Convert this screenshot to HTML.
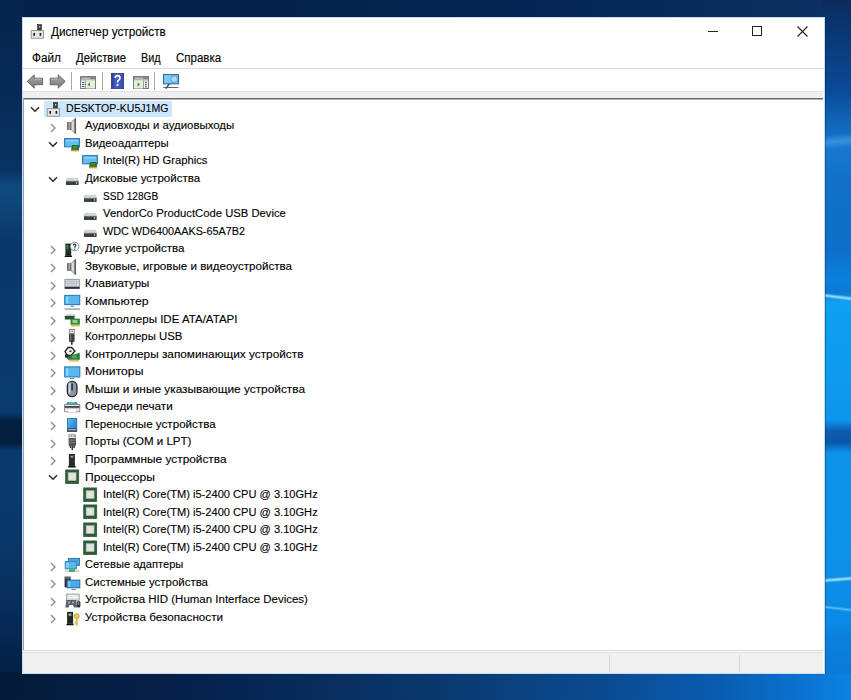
<!DOCTYPE html>
<html><head><meta charset="utf-8"><style>
html,body{margin:0;padding:0;width:851px;height:700px;overflow:hidden;}
body{position:relative;font-family:"Liberation Sans",sans-serif;background:#0a3264;}
.bg{position:absolute;left:0;top:0;width:851px;height:700px;background:#0a3468;}
.st{position:absolute;}
.win{position:absolute;left:22px;top:17px;width:803px;height:657px;background:#fff;box-sizing:border-box;border:1px solid #c8dcf0;}
.a{position:absolute;}
.t{position:absolute;font-size:12px;color:#000;-webkit-text-stroke:0.12px #000;white-space:nowrap;line-height:14px;}
.hl{position:absolute;left:44px;width:128px;height:16px;background:#cce8ff;}
.ex{position:absolute;}
.ic{position:absolute;width:16px;height:16px;}
.ic svg{display:block;}
.tx{position:absolute;font-size:11.7px;line-height:16px;white-space:nowrap;color:#000;-webkit-text-stroke:0.12px #000;transform-origin:0 50%;}
</style></head><body>
<div class="bg"></div>
<div class="st" style="left:0;top:0;width:851px;height:20px;background:linear-gradient(90deg,#04204a 0px,#04224a 300px,#062858 600px,#0a3262 851px)"></div>
<div class="st" style="left:0;top:0px;width:24px;height:680px;background:linear-gradient(180deg,#05244c 0px,#072c58 100px,#083262 170px,#0f4a80 186px,#0e4678 204px,#0a386a 240px,#0a3a6e 380px,#0a3c70 412px,#04203f 421px,#041e3e 443px,#0a3a70 451px,#0a3868 540px,#072c5a 610px,#05244c 650px,#04203f 680px)"></div>
<div class="st" style="left:0;top:672px;width:851px;height:28px;background:linear-gradient(90deg,#041a38 0px,#05204a 180px,#082e5e 330px,#0a3a70 450px,#0a4a90 600px,#0a5cb0 720px,#0a72d0 800px,#0c82e2 851px)"></div>
<div class="st" style="left:822px;top:0;width:29px;height:674px;background:linear-gradient(180deg,#0a2c5c 0px,#0a3a78 40px,#0a4a96 90px,#1068bc 125px,#1878d0 145px,#1270c8 180px,#0e70c8 250px,#0a80dc 280px,#0a7ad4 292px,#10a0f0 302px,#0d96ec 420px,#0c5eb0 431px,#0a56a6 442px,#0d92ea 453px,#0c90e8 560px,#0a8ce6 620px,#0a80dc 640px,#0a7ad6 674px)"></div>
<div class="st" style="left:822px;top:136px;width:40px;height:14px;background:linear-gradient(180deg,rgba(80,160,230,0) 0,rgba(90,170,235,0.5) 50%,rgba(80,160,230,0) 100%);transform:rotate(-6deg);transform-origin:0 50%"></div>
<div class="st" style="left:825px;top:293px;width:40px;height:5px;background:linear-gradient(180deg,rgba(150,224,255,0) 0,rgba(160,228,255,0.95) 50%,rgba(150,224,255,0) 100%);transform:rotate(7deg);transform-origin:0 50%"></div>
<div class="st" style="left:825px;top:577.5px;width:40px;height:5px;background:linear-gradient(180deg,rgba(150,224,255,0) 0,rgba(170,230,255,0.95) 50%,rgba(150,224,255,0) 100%);transform:rotate(-4.6deg);transform-origin:0 50%"></div>
<div class="st" style="left:825px;top:605px;width:40px;height:4px;background:linear-gradient(180deg,rgba(140,208,248,0) 0,rgba(150,215,250,0.6) 50%,rgba(140,208,248,0) 100%);transform:rotate(6.6deg);transform-origin:0 50%"></div>
<div class="st" style="left:825px;top:17px;width:1px;height:657px;background:rgba(0,30,80,0.35)"></div>
<div class="win"></div>
<!-- title bar -->
<div class="a" style="left:30px;top:23.3px;width:16px;height:16px"><svg width="16" height="16" viewBox="0 0 16 16" style="overflow:visible"><rect x="7.5" y="1.5" width="4" height="6.5" fill="#3c3f3c" stroke="#2a2a2a" stroke-width="0.6"/><rect x="9" y="3" width="1.2" height="1.5" fill="#cfd8cf"/><rect x="1.2" y="7.6" width="12.3" height="7.6" fill="#e6e6e6" stroke="#8c8c8c" stroke-width="0.9"/><rect x="3.4" y="10" width="1.6" height="2.8" fill="#151515"/><rect x="9.6" y="10" width="1.6" height="2.8" fill="#151515"/></svg></div>
<div class="t" style="left:50.5px;top:25px;transform:scaleX(0.978);transform-origin:0 0">Диспетчер устройств</div>
<div class="a" style="left:708px;top:31px;width:10px;height:1px;background:#222"></div>
<div class="a" style="left:752px;top:26px;width:8px;height:8px;border:1px solid #222"></div>
<svg class="a" style="left:797px;top:26px" width="11" height="11" viewBox="0 0 11 11"><path d="M0.5 0.5 L10.5 10.5 M10.5 0.5 L0.5 10.5" stroke="#222" stroke-width="1.1"/></svg>
<!-- menu -->
<div class="t" style="left:31.8px;top:51px;transform:scaleX(0.98);transform-origin:0 0">Файл</div>
<div class="t" style="left:76.3px;top:51px;transform:scaleX(0.95);transform-origin:0 0">Действие</div>
<div class="t" style="left:140.8px;top:51px;transform:scaleX(0.905);transform-origin:0 0">Вид</div>
<div class="t" style="left:176.3px;top:51px;transform:scaleX(0.96);transform-origin:0 0">Справка</div>
<div class="a" style="left:23px;top:68px;width:801px;height:1px;background:#d9d9d9"></div>
<!-- toolbar -->
<div class="a" style="left:23px;top:91px;width:800px;height:7px;background:#f0f0f0;border-top:1px solid #e3e3e3;box-sizing:border-box"></div>
<div class="a" style="left:23px;top:98px;width:800px;height:1px;background:#686868"></div>
<div class="a" style="left:24px;top:99px;width:799px;height:1px;background:#b4b4b4"></div>
<div class="a" style="left:71px;top:72px;width:1px;height:18px;background:#a8a8a8"></div>
<div class="a" style="left:102px;top:72px;width:1px;height:18px;background:#a8a8a8"></div>
<div class="a" style="left:154px;top:72px;width:1px;height:18px;background:#a8a8a8"></div>
<svg class="a" style="left:26px;top:73px" width="18" height="17" viewBox="0 0 18 17"><defs><linearGradient id="ar" x1="0" y1="0" x2="0" y2="1"><stop offset="0" stop-color="#a6a6a6"/><stop offset="1" stop-color="#7a7a7a"/></linearGradient></defs><path d="M1.2 8.4 L8.2 1.8 L8.2 5.2 L16.6 5.2 L16.6 11.7 L8.2 11.7 L8.2 15.2 Z" fill="url(#ar)" stroke="#5c5c5c" stroke-width="0.9" stroke-linejoin="round"/><path d="M9 6.2 L15.6 6.2" stroke="#c8c8c8" stroke-width="0.8"/></svg>
<svg class="a" style="left:49px;top:73px" width="18" height="17" viewBox="0 0 18 17"><path d="M16.2 8.4 L9.2 1.8 L9.2 5.2 L1.2 5.2 L1.2 11.7 L9.2 11.7 L9.2 15.2 Z" fill="url(#ar)" stroke="#5c5c5c" stroke-width="0.9" stroke-linejoin="round"/><path d="M2.2 6.2 L8.6 6.2" stroke="#c8c8c8" stroke-width="0.8"/></svg>
<svg class="a" style="left:80px;top:76px" width="16" height="13" viewBox="0 0 16 13"><rect x="0.5" y="0.5" width="15" height="12" fill="#f2f2f2" stroke="#7a7a7a"/><rect x="1" y="1" width="14" height="2.6" fill="#8a8a8a"/><rect x="2" y="1.8" width="8" height="0.8" fill="#e0e0e0"/><rect x="1" y="3.6" width="14" height="1" fill="#b8b8b8"/><rect x="5.2" y="4.6" width="0.8" height="8" fill="#8a8a8a"/><rect x="6" y="4.6" width="9" height="7.9" fill="#e2f2da"/><path d="M10 6.2 L7.6 8.5 L10 10.8 Z" fill="#4a8a48"/><rect x="2" y="6" width="2.4" height="1" fill="#555"/><rect x="2" y="8" width="2.4" height="1" fill="#555"/><rect x="2" y="10" width="2.4" height="1" fill="#555"/></svg>
<svg class="a" style="left:111px;top:73px" width="13" height="16" viewBox="0 0 13 16"><defs><linearGradient id="hq" x1="0" y1="0" x2="1" y2="0"><stop offset="0" stop-color="#24359a"/><stop offset="0.4" stop-color="#4a62c8"/><stop offset="1" stop-color="#3448a8"/></linearGradient></defs><rect x="0.3" y="0.3" width="12.4" height="15.4" fill="url(#hq)" stroke="#1c2a70" stroke-width="0.6"/><path d="M4.2 5 Q4.2 2.6 6.6 2.6 Q9 2.6 9 4.9 Q9 6.4 7.4 7.4 Q6.6 7.9 6.6 9.6" fill="none" stroke="#fff" stroke-width="1.6"/><rect x="5.7" y="11" width="1.8" height="1.8" fill="#fff"/></svg>
<svg class="a" style="left:133px;top:76px" width="16" height="13" viewBox="0 0 16 13"><rect x="0.5" y="0.5" width="15" height="12" fill="#f2f2f2" stroke="#7a7a7a"/><rect x="1" y="1" width="14" height="2.6" fill="#8a8a8a"/><rect x="2" y="1.8" width="8" height="0.8" fill="#e0e0e0"/><rect x="1" y="3.6" width="14" height="1" fill="#b8b8b8"/><rect x="1" y="4.6" width="9" height="7.9" fill="#e2f2da"/><rect x="10" y="4.6" width="0.8" height="8" fill="#8a8a8a"/><path d="M4.6 6.2 L7 8.5 L4.6 10.8 Z" fill="#4a8a48"/><rect x="12.2" y="5.8" width="1.4" height="1.2" fill="#333"/><rect x="12.2" y="8" width="1.4" height="1.2" fill="#333"/><rect x="12.2" y="10.2" width="1.4" height="1.2" fill="#333"/></svg>
<svg class="a" style="left:162px;top:73px" width="18" height="17" viewBox="0 0 18 17"><rect x="1.5" y="1.5" width="15" height="9.4" fill="#6cc0f0" stroke="#2e6a94" stroke-width="1"/><rect x="2.5" y="2.5" width="6" height="7.4" fill="#7ccaf6"/><circle cx="12.2" cy="6.2" r="3.3" fill="#a8dcf8" stroke="#4a9ad0" stroke-width="0.8"/><path d="M7.2 11 L3.8 15.6" stroke="#444" stroke-width="1.4"/><path d="M1.2 14.5 L16.4 14.5" stroke="#555" stroke-width="0.9"/></svg>
<!-- tree border left -->
<div class="a" style="left:23px;top:98px;width:1px;height:552px;background:#9aa2ac"></div>
<div class="hl" style="top:100.50px"></div><svg class="ex" style="left:30px;top:104.50px" width="10" height="8" viewBox="0 0 10 8"><path d="M1 2.3 L5 6.3 L9 2.3" fill="none" stroke="#2a2a2a" stroke-width="1.5"/></svg><div class="ic" style="left:46px;top:100.50px"><svg width="16" height="16" viewBox="0 0 16 16" style="overflow:visible"><rect x="7.5" y="1.5" width="4" height="6.5" fill="#3c3f3c" stroke="#2a2a2a" stroke-width="0.6"/><rect x="9" y="3" width="1.2" height="1.5" fill="#cfd8cf"/><rect x="1.2" y="7.6" width="12.3" height="7.6" fill="#e6e6e6" stroke="#8c8c8c" stroke-width="0.9"/><rect x="3.4" y="10" width="1.6" height="2.8" fill="#151515"/><rect x="9.6" y="10" width="1.6" height="2.8" fill="#151515"/></svg></div><div class="tx" style="left:65.60px;top:99.80px;transform:scaleX(0.9036)">DESKTOP-KU5J1MG</div>
<svg class="ex" style="left:49px;top:122.56px" width="8" height="10" viewBox="0 0 8 10"><path d="M2 1 L6 5 L2 9" fill="none" stroke="#8a8a8a" stroke-width="1.3"/></svg><div class="ic" style="left:64px;top:118.06px"><svg width="16" height="16" viewBox="0 0 16 16" style="overflow:visible"><defs><linearGradient id="sp" x1="0" x2="1"><stop offset="0" stop-color="#c4c4c4"/><stop offset="0.45" stop-color="#e6e6e6"/><stop offset="1" stop-color="#6c6c6c"/></linearGradient><linearGradient id="sr" x1="0" x2="1"><stop offset="0" stop-color="#5a5a5a"/><stop offset="0.5" stop-color="#a8a8a8"/><stop offset="1" stop-color="#7a7a7a"/></linearGradient></defs><rect x="3.2" y="4.6" width="4" height="7" fill="url(#sr)" stroke="#555" stroke-width="0.5"/><path d="M7 4.6 L11.6 0.2 L11.6 15.8 L7 11.6 Z" fill="url(#sp)" stroke="#5a5a5a" stroke-width="0.6"/><path d="M11.2 0.8 L11.2 15.2" stroke="#4a4a4a" stroke-width="0.9"/></svg></div><div class="tx" style="left:84.80px;top:117.36px;transform:scaleX(0.9763)">Аудиовходы и аудиовыходы</div>
<svg class="ex" style="left:48px;top:139.62px" width="10" height="8" viewBox="0 0 10 8"><path d="M1 2.3 L5 6.3 L9 2.3" fill="none" stroke="#2a2a2a" stroke-width="1.5"/></svg><div class="ic" style="left:64px;top:135.62px"><svg width="16" height="16" viewBox="0 0 16 16" style="overflow:visible"><rect x="0.6" y="2.6" width="14.8" height="8.2" fill="#62bdf0" stroke="#2c79b5" stroke-width="1.1"/><rect x="2" y="4" width="12" height="1.5" fill="#8ad2f8"/><path d="M7 14.5 L8 9 L14.8 9 L15 14.5 Z" fill="#2f6a30"/><rect x="9" y="10" width="4" height="2.5" fill="#3f8f3a"/><rect x="7.2" y="13.8" width="7.6" height="1.6" fill="#caa24a"/></svg></div><div class="tx" style="left:84.80px;top:134.92px;transform:scaleX(0.9629)">Видеоадаптеры</div>
<div class="ic" style="left:82px;top:153.18px"><svg width="16" height="16" viewBox="0 0 16 16" style="overflow:visible"><rect x="0.6" y="2.6" width="14.8" height="8.2" fill="#62bdf0" stroke="#2c79b5" stroke-width="1.1"/><rect x="2" y="4" width="12" height="1.5" fill="#8ad2f8"/><path d="M7 14.5 L8 9 L14.8 9 L15 14.5 Z" fill="#2f6a30"/><rect x="9" y="10" width="4" height="2.5" fill="#3f8f3a"/><rect x="7.2" y="13.8" width="7.6" height="1.6" fill="#caa24a"/></svg></div><div class="tx" style="left:102.60px;top:152.48px;transform:scaleX(0.9626)">Intel(R) HD Graphics</div>
<svg class="ex" style="left:48px;top:174.74px" width="10" height="8" viewBox="0 0 10 8"><path d="M1 2.3 L5 6.3 L9 2.3" fill="none" stroke="#2a2a2a" stroke-width="1.5"/></svg><div class="ic" style="left:64px;top:170.74px"><svg width="16" height="16" viewBox="0 0 16 16" style="overflow:visible"><defs><linearGradient id="dk" x1="0" x2="0" y1="0" y2="1"><stop offset="0" stop-color="#e8ece8"/><stop offset="1" stop-color="#b4bab4"/></linearGradient></defs><path d="M2 10.6 L3 7.3 L13.6 7.3 L14.6 10.6 Z" fill="url(#dk)" stroke="#a0a6a0" stroke-width="0.5"/><rect x="2" y="10.4" width="12.6" height="3.5" fill="#2b3630"/><rect x="3" y="11.4" width="6" height="0.9" fill="#4a5a50"/><rect x="11.8" y="11.3" width="1.4" height="1.3" fill="#e8f0e8"/></svg></div><div class="tx" style="left:84.80px;top:170.04px;transform:scaleX(0.9879)">Дисковые устройства</div>
<div class="ic" style="left:82px;top:188.30px"><svg width="16" height="16" viewBox="0 0 16 16" style="overflow:visible"><defs><linearGradient id="dk" x1="0" x2="0" y1="0" y2="1"><stop offset="0" stop-color="#e8ece8"/><stop offset="1" stop-color="#b4bab4"/></linearGradient></defs><path d="M2 10.6 L3 7.3 L13.6 7.3 L14.6 10.6 Z" fill="url(#dk)" stroke="#a0a6a0" stroke-width="0.5"/><rect x="2" y="10.4" width="12.6" height="3.5" fill="#2b3630"/><rect x="3" y="11.4" width="6" height="0.9" fill="#4a5a50"/><rect x="11.8" y="11.3" width="1.4" height="1.3" fill="#e8f0e8"/></svg></div><div class="tx" style="left:102.60px;top:187.60px;transform:scaleX(0.8669)">SSD 128GB</div>
<div class="ic" style="left:82px;top:205.86px"><svg width="16" height="16" viewBox="0 0 16 16" style="overflow:visible"><defs><linearGradient id="dk" x1="0" x2="0" y1="0" y2="1"><stop offset="0" stop-color="#e8ece8"/><stop offset="1" stop-color="#b4bab4"/></linearGradient></defs><path d="M2 10.6 L3 7.3 L13.6 7.3 L14.6 10.6 Z" fill="url(#dk)" stroke="#a0a6a0" stroke-width="0.5"/><rect x="2" y="10.4" width="12.6" height="3.5" fill="#2b3630"/><rect x="3" y="11.4" width="6" height="0.9" fill="#4a5a50"/><rect x="11.8" y="11.3" width="1.4" height="1.3" fill="#e8f0e8"/></svg></div><div class="tx" style="left:102.60px;top:205.16px;transform:scaleX(0.9640)">VendorCo ProductCode USB Device</div>
<div class="ic" style="left:82px;top:223.42px"><svg width="16" height="16" viewBox="0 0 16 16" style="overflow:visible"><defs><linearGradient id="dk" x1="0" x2="0" y1="0" y2="1"><stop offset="0" stop-color="#e8ece8"/><stop offset="1" stop-color="#b4bab4"/></linearGradient></defs><path d="M2 10.6 L3 7.3 L13.6 7.3 L14.6 10.6 Z" fill="url(#dk)" stroke="#a0a6a0" stroke-width="0.5"/><rect x="2" y="10.4" width="12.6" height="3.5" fill="#2b3630"/><rect x="3" y="11.4" width="6" height="0.9" fill="#4a5a50"/><rect x="11.8" y="11.3" width="1.4" height="1.3" fill="#e8f0e8"/></svg></div><div class="tx" style="left:102.60px;top:222.72px;transform:scaleX(0.9263)">WDC WD6400AAKS-65A7B2</div>
<svg class="ex" style="left:49px;top:245.48px" width="8" height="10" viewBox="0 0 8 10"><path d="M2 1 L6 5 L2 9" fill="none" stroke="#8a8a8a" stroke-width="1.3"/></svg><div class="ic" style="left:64px;top:240.98px"><svg width="16" height="16" viewBox="0 0 16 16" style="overflow:visible"><rect x="1.4" y="2.6" width="5.8" height="11.8" fill="#1c2a1e"/><rect x="2.4" y="3.8" width="2.2" height="4.5" fill="#3f7a42"/><rect x="2.4" y="9.5" width="3.8" height="0.7" fill="#4a5a4a"/><path d="M0.4 16 L1.2 14.2 L7.4 14.2 L8.2 16 Z" fill="#111"/><circle cx="10.6" cy="5.5" r="4.3" fill="#fbfdfb" stroke="#6a8a94" stroke-width="0.9"/><path d="M9.3 4.4 Q9.4 3.1 10.6 3.1 Q11.9 3.1 11.9 4.3 Q11.9 5.1 10.8 5.7 L10.8 6.7" fill="none" stroke="#1a2a3a" stroke-width="1.1"/><rect x="10.2" y="7.5" width="1.1" height="1.1" fill="#1a2a3a"/></svg></div><div class="tx" style="left:84.80px;top:240.28px;transform:scaleX(0.9860)">Другие устройства</div>
<svg class="ex" style="left:49px;top:263.04px" width="8" height="10" viewBox="0 0 8 10"><path d="M2 1 L6 5 L2 9" fill="none" stroke="#8a8a8a" stroke-width="1.3"/></svg><div class="ic" style="left:64px;top:258.54px"><svg width="16" height="16" viewBox="0 0 16 16" style="overflow:visible"><defs><linearGradient id="sp" x1="0" x2="1"><stop offset="0" stop-color="#c4c4c4"/><stop offset="0.45" stop-color="#e6e6e6"/><stop offset="1" stop-color="#6c6c6c"/></linearGradient><linearGradient id="sr" x1="0" x2="1"><stop offset="0" stop-color="#5a5a5a"/><stop offset="0.5" stop-color="#a8a8a8"/><stop offset="1" stop-color="#7a7a7a"/></linearGradient></defs><rect x="3.2" y="4.6" width="4" height="7" fill="url(#sr)" stroke="#555" stroke-width="0.5"/><path d="M7 4.6 L11.6 0.2 L11.6 15.8 L7 11.6 Z" fill="url(#sp)" stroke="#5a5a5a" stroke-width="0.6"/><path d="M11.2 0.8 L11.2 15.2" stroke="#4a4a4a" stroke-width="0.9"/></svg></div><div class="tx" style="left:84.80px;top:257.84px;transform:scaleX(0.9914)">Звуковые, игровые и видеоустройства</div>
<svg class="ex" style="left:49px;top:280.60px" width="8" height="10" viewBox="0 0 8 10"><path d="M2 1 L6 5 L2 9" fill="none" stroke="#8a8a8a" stroke-width="1.3"/></svg><div class="ic" style="left:64px;top:276.10px"><svg width="16" height="16" viewBox="0 0 16 16" style="overflow:visible"><rect x="0.8" y="3.2" width="14.8" height="9.2" fill="#9ea4aa" stroke="#8a9096" stroke-width="0.6"/><path d="M1.6 4.8h13.2M1.6 6.9h13.2M1.6 9h13.2" stroke="#f4f6f8" stroke-width="1.3"/><path d="M3.6 4v6M5.8 4v6M8 4v6M10.2 4v6M12.4 4v6" stroke="#a8aeb4" stroke-width="0.7"/><rect x="0.8" y="11" width="14.8" height="1.8" fill="#2c3034"/></svg></div><div class="tx" style="left:84.80px;top:275.40px;transform:scaleX(0.9875)">Клавиатуры</div>
<svg class="ex" style="left:49px;top:298.16px" width="8" height="10" viewBox="0 0 8 10"><path d="M2 1 L6 5 L2 9" fill="none" stroke="#8a8a8a" stroke-width="1.3"/></svg><div class="ic" style="left:64px;top:293.66px"><svg width="16" height="16" viewBox="0 0 16 16" style="overflow:visible"><rect x="0.7" y="1.4" width="15" height="9.2" fill="#5bb8ef" stroke="#2b7fbf" stroke-width="1.1"/><rect x="2" y="2.8" width="2.2" height="6.5" fill="#8fd4f8"/><rect x="6.5" y="11.6" width="3.4" height="1.2" fill="#6a8aa0"/><rect x="0.5" y="14.3" width="15.5" height="1.6" fill="#a9adb0"/></svg></div><div class="tx" style="left:84.80px;top:292.96px;transform:scaleX(1.0506)">Компьютер</div>
<svg class="ex" style="left:49px;top:315.72px" width="8" height="10" viewBox="0 0 8 10"><path d="M2 1 L6 5 L2 9" fill="none" stroke="#8a8a8a" stroke-width="1.3"/></svg><div class="ic" style="left:64px;top:311.22px"><svg width="16" height="16" viewBox="0 0 16 16" style="overflow:visible"><path d="M1.2 5.5 L3 3.8 L11 3.8 L11 6.5 L1.2 6.5 Z" fill="#d6d6d6" stroke="#9a9a9a" stroke-width="0.5"/><rect x="0.8" y="5" width="9.5" height="3.5" fill="#2e4a36"/><rect x="6.5" y="7.6" width="9.4" height="6.2" fill="#2f8a3c"/><rect x="8.5" y="9" width="5" height="3" fill="#96d08a"/><rect x="7" y="13.5" width="8.5" height="2" fill="#d4b860"/></svg></div><div class="tx" style="left:84.80px;top:310.52px;transform:scaleX(0.9869)">Контроллеры IDE ATA/ATAPI</div>
<svg class="ex" style="left:49px;top:333.28px" width="8" height="10" viewBox="0 0 8 10"><path d="M2 1 L6 5 L2 9" fill="none" stroke="#8a8a8a" stroke-width="1.3"/></svg><div class="ic" style="left:64px;top:328.78px"><svg width="16" height="16" viewBox="0 0 16 16" style="overflow:visible"><rect x="5.3" y="0.5" width="5" height="4.4" fill="#f4f4f4" stroke="#777" stroke-width="0.8"/><rect x="6.6" y="1.6" width="1" height="1" fill="#555"/><rect x="8" y="1.6" width="1" height="1" fill="#555"/><rect x="5" y="4.6" width="5.6" height="8.6" rx="1.6" fill="#3f4244"/><rect x="6" y="5.2" width="1.3" height="6.5" fill="#6c7072"/><rect x="7" y="13" width="1.6" height="2.8" fill="#2c2c2c"/></svg></div><div class="tx" style="left:84.80px;top:328.08px;transform:scaleX(0.9717)">Контроллеры USB</div>
<svg class="ex" style="left:49px;top:350.84px" width="8" height="10" viewBox="0 0 8 10"><path d="M2 1 L6 5 L2 9" fill="none" stroke="#8a8a8a" stroke-width="1.3"/></svg><div class="ic" style="left:64px;top:346.34px"><svg width="16" height="16" viewBox="0 0 16 16" style="overflow:visible"><path d="M4 1.5 L7.6 1.5 L11 5 L7 9.5 L3.4 9.5 L1 5.5 Z" fill="#f4f4f4" stroke="#1e1e1e" stroke-width="1.3"/><rect x="5.3" y="4.5" width="2.2" height="1.6" fill="#3a3a3a"/><path d="M0.8 8.2 L5 10 L15.8 6.8 L15.8 13.8 L4 13.8 Z" fill="#2f7a3a"/><rect x="8" y="9.5" width="5" height="2.6" fill="#4ea84a"/><rect x="1" y="8.5" width="3.5" height="3" fill="#2a2a2a"/><rect x="5" y="14" width="10" height="1.6" fill="#d9c070"/></svg></div><div class="tx" style="left:84.80px;top:345.64px;transform:scaleX(1.0102)">Контроллеры запоминающих устройств</div>
<svg class="ex" style="left:49px;top:368.40px" width="8" height="10" viewBox="0 0 8 10"><path d="M2 1 L6 5 L2 9" fill="none" stroke="#8a8a8a" stroke-width="1.3"/></svg><div class="ic" style="left:64px;top:363.90px"><svg width="16" height="16" viewBox="0 0 16 16" style="overflow:visible"><rect x="0.7" y="2.9" width="15.1" height="10" fill="#5bb8ef" stroke="#2b7fbf" stroke-width="1.1"/><rect x="2" y="4.2" width="2.4" height="7.4" fill="#8fd4f8"/><rect x="5.8" y="14" width="4.6" height="1" fill="#6a8aa0"/></svg></div><div class="tx" style="left:84.80px;top:363.20px;transform:scaleX(1.0436)">Мониторы</div>
<svg class="ex" style="left:49px;top:385.96px" width="8" height="10" viewBox="0 0 8 10"><path d="M2 1 L6 5 L2 9" fill="none" stroke="#8a8a8a" stroke-width="1.3"/></svg><div class="ic" style="left:64px;top:381.46px"><svg width="16" height="16" viewBox="0 0 16 16" style="overflow:visible"><rect x="3.3" y="0.3" width="9.6" height="15.4" rx="4.6" fill="#8a96a6" stroke="#24282e" stroke-width="1.3"/><rect x="4.6" y="1.6" width="2" height="11" rx="1" fill="#c8d4e0"/><rect x="7.4" y="2.4" width="1.4" height="7" fill="#1e2228"/></svg></div><div class="tx" style="left:84.80px;top:380.76px;transform:scaleX(1.0139)">Мыши и иные указывающие устройства</div>
<svg class="ex" style="left:49px;top:403.52px" width="8" height="10" viewBox="0 0 8 10"><path d="M2 1 L6 5 L2 9" fill="none" stroke="#8a8a8a" stroke-width="1.3"/></svg><div class="ic" style="left:64px;top:399.02px"><svg width="16" height="16" viewBox="0 0 16 16" style="overflow:visible"><path d="M3.5 3 L12.8 3 L14 5.8 L2.3 5.8 Z" fill="#25a0a0"/><rect x="5" y="3.4" width="6" height="1.2" fill="#7ad0d0"/><rect x="0.6" y="5.6" width="15.2" height="3.2" fill="#f4f4f4" stroke="#6a6a6a" stroke-width="0.8"/><rect x="1" y="7.2" width="14.4" height="1.8" fill="#151515"/><rect x="0.6" y="8.8" width="15.2" height="4" fill="#eef0f0" stroke="#7a7a7a" stroke-width="0.8"/><rect x="4" y="9.6" width="8.4" height="4" fill="#fff" stroke="#b0b0b0" stroke-width="0.5"/></svg></div><div class="tx" style="left:84.80px;top:398.32px;transform:scaleX(1.0003)">Очереди печати</div>
<svg class="ex" style="left:49px;top:421.08px" width="8" height="10" viewBox="0 0 8 10"><path d="M2 1 L6 5 L2 9" fill="none" stroke="#8a8a8a" stroke-width="1.3"/></svg><div class="ic" style="left:64px;top:416.58px"><svg width="16" height="16" viewBox="0 0 16 16" style="overflow:visible"><defs><linearGradient id="pt" x1="0" x2="1" y1="0" y2="1"><stop offset="0" stop-color="#5ac4f6"/><stop offset="1" stop-color="#1570c8"/></linearGradient></defs><rect x="3.4" y="1.5" width="9.4" height="13.1" fill="url(#pt)" stroke="#1c5a90" stroke-width="0.7"/><rect x="3.4" y="11.2" width="9.4" height="3.4" fill="#3a4550"/><rect x="4" y="12.3" width="8.2" height="0.9" fill="#d0d8e0"/></svg></div><div class="tx" style="left:84.80px;top:415.88px;transform:scaleX(0.9939)">Переносные устройства</div>
<svg class="ex" style="left:49px;top:438.64px" width="8" height="10" viewBox="0 0 8 10"><path d="M2 1 L6 5 L2 9" fill="none" stroke="#8a8a8a" stroke-width="1.3"/></svg><div class="ic" style="left:64px;top:434.14px"><svg width="16" height="16" viewBox="0 0 16 16" style="overflow:visible"><rect x="5" y="0.3" width="6.4" height="3.8" fill="#fafafa" stroke="#8a8a8a" stroke-width="0.7"/><path d="M6 1v2M7.6 1v2M9.2 1v2M10.6 1v2" stroke="#777" stroke-width="0.7"/><rect x="4.6" y="4" width="7.4" height="8" rx="1.2" fill="#505456"/><path d="M5.3 6.2h6M5.3 8.6h6" stroke="#80868a" stroke-width="0.9"/><rect x="5.8" y="12" width="1.4" height="2" fill="#2e2e2e"/><rect x="9.4" y="12" width="1.4" height="2" fill="#2e2e2e"/><rect x="7.5" y="12" width="1.6" height="4" fill="#3a3a3a"/></svg></div><div class="tx" style="left:84.80px;top:433.44px;transform:scaleX(0.9887)">Порты (COM и LPT)</div>
<svg class="ex" style="left:49px;top:456.20px" width="8" height="10" viewBox="0 0 8 10"><path d="M2 1 L6 5 L2 9" fill="none" stroke="#8a8a8a" stroke-width="1.3"/></svg><div class="ic" style="left:64px;top:451.70px"><svg width="16" height="16" viewBox="0 0 16 16" style="overflow:visible"><rect x="4.9" y="2" width="6" height="11.4" fill="#23282a"/><rect x="6" y="3.2" width="3.8" height="3" fill="#3a4e44"/><rect x="7.2" y="4" width="1.5" height="1.5" fill="#bcd8c4"/><path d="M4.9 8.5h6M4.9 10h6" stroke="#3c3c3c" stroke-width="0.6"/><path d="M3.8 15.4 L4.9 13.2 L10.9 13.2 L12 15.4 Z" fill="#111"/></svg></div><div class="tx" style="left:84.80px;top:451.00px;transform:scaleX(1.0144)">Программные устройства</div>
<svg class="ex" style="left:48px;top:473.26px" width="10" height="8" viewBox="0 0 10 8"><path d="M1 2.3 L5 6.3 L9 2.3" fill="none" stroke="#2a2a2a" stroke-width="1.5"/></svg><div class="ic" style="left:64px;top:469.26px"><svg width="16" height="16" viewBox="0 0 16 16" style="overflow:visible"><rect x="1.1" y="0.4" width="14" height="14.6" fill="#2f5b3a"/><path d="M1.1 0.4h14v14.6h-14z" fill="none" stroke="#fff" stroke-width="0.6" stroke-dasharray="0.9 0.9" opacity="0.7"/><rect x="4.1" y="3.6" width="8" height="8" fill="#d6e2d8" stroke="#a8bca8" stroke-width="0.5"/><rect x="5.5" y="5" width="5" height="5" fill="#e8e2e6"/></svg></div><div class="tx" style="left:84.80px;top:468.56px;transform:scaleX(1.0333)">Процессоры</div>
<div class="ic" style="left:82px;top:486.82px"><svg width="16" height="16" viewBox="0 0 16 16" style="overflow:visible"><rect x="1.1" y="0.4" width="14" height="14.6" fill="#2f5b3a"/><path d="M1.1 0.4h14v14.6h-14z" fill="none" stroke="#fff" stroke-width="0.6" stroke-dasharray="0.9 0.9" opacity="0.7"/><rect x="4.1" y="3.6" width="8" height="8" fill="#d6e2d8" stroke="#a8bca8" stroke-width="0.5"/><rect x="5.5" y="5" width="5" height="5" fill="#e8e2e6"/></svg></div><div class="tx" style="left:102.60px;top:486.12px;transform:scaleX(0.9491)">Intel(R) Core(TM) i5-2400 CPU @ 3.10GHz</div>
<div class="ic" style="left:82px;top:504.38px"><svg width="16" height="16" viewBox="0 0 16 16" style="overflow:visible"><rect x="1.1" y="0.4" width="14" height="14.6" fill="#2f5b3a"/><path d="M1.1 0.4h14v14.6h-14z" fill="none" stroke="#fff" stroke-width="0.6" stroke-dasharray="0.9 0.9" opacity="0.7"/><rect x="4.1" y="3.6" width="8" height="8" fill="#d6e2d8" stroke="#a8bca8" stroke-width="0.5"/><rect x="5.5" y="5" width="5" height="5" fill="#e8e2e6"/></svg></div><div class="tx" style="left:102.60px;top:503.68px;transform:scaleX(0.9491)">Intel(R) Core(TM) i5-2400 CPU @ 3.10GHz</div>
<div class="ic" style="left:82px;top:521.94px"><svg width="16" height="16" viewBox="0 0 16 16" style="overflow:visible"><rect x="1.1" y="0.4" width="14" height="14.6" fill="#2f5b3a"/><path d="M1.1 0.4h14v14.6h-14z" fill="none" stroke="#fff" stroke-width="0.6" stroke-dasharray="0.9 0.9" opacity="0.7"/><rect x="4.1" y="3.6" width="8" height="8" fill="#d6e2d8" stroke="#a8bca8" stroke-width="0.5"/><rect x="5.5" y="5" width="5" height="5" fill="#e8e2e6"/></svg></div><div class="tx" style="left:102.60px;top:521.24px;transform:scaleX(0.9491)">Intel(R) Core(TM) i5-2400 CPU @ 3.10GHz</div>
<div class="ic" style="left:82px;top:539.50px"><svg width="16" height="16" viewBox="0 0 16 16" style="overflow:visible"><rect x="1.1" y="0.4" width="14" height="14.6" fill="#2f5b3a"/><path d="M1.1 0.4h14v14.6h-14z" fill="none" stroke="#fff" stroke-width="0.6" stroke-dasharray="0.9 0.9" opacity="0.7"/><rect x="4.1" y="3.6" width="8" height="8" fill="#d6e2d8" stroke="#a8bca8" stroke-width="0.5"/><rect x="5.5" y="5" width="5" height="5" fill="#e8e2e6"/></svg></div><div class="tx" style="left:102.60px;top:538.80px;transform:scaleX(0.9491)">Intel(R) Core(TM) i5-2400 CPU @ 3.10GHz</div>
<svg class="ex" style="left:49px;top:561.56px" width="8" height="10" viewBox="0 0 8 10"><path d="M2 1 L6 5 L2 9" fill="none" stroke="#8a8a8a" stroke-width="1.3"/></svg><div class="ic" style="left:64px;top:557.06px"><svg width="16" height="16" viewBox="0 0 16 16" style="overflow:visible"><rect x="4.3" y="1.4" width="11.2" height="7" fill="#4ea8e0" stroke="#2b6fa8" stroke-width="0.9"/><rect x="1.2" y="4.6" width="11.2" height="7.2" fill="#5bb8ef" stroke="#2b7fbf" stroke-width="0.9"/><rect x="2.3" y="5.8" width="2.4" height="4.8" fill="#8fd4f8"/><rect x="0.8" y="13.2" width="14.6" height="1.6" fill="#c8d0c8"/><rect x="5" y="12.2" width="6" height="2.6" fill="#3ab04a"/></svg></div><div class="tx" style="left:84.80px;top:556.36px;transform:scaleX(0.9510)">Сетевые адаптеры</div>
<svg class="ex" style="left:49px;top:579.12px" width="8" height="10" viewBox="0 0 8 10"><path d="M2 1 L6 5 L2 9" fill="none" stroke="#8a8a8a" stroke-width="1.3"/></svg><div class="ic" style="left:64px;top:574.62px"><svg width="16" height="16" viewBox="0 0 16 16" style="overflow:visible"><rect x="0.6" y="1.6" width="6" height="10.8" fill="#2a2e30"/><rect x="1.4" y="2.3" width="4.4" height="1.4" fill="#7a7e80"/><rect x="3" y="5.1" width="12.8" height="7.7" fill="#4aaae8" stroke="#1e6aa8" stroke-width="1"/><rect x="4.2" y="6.2" width="2" height="5.5" fill="#7ccaf4"/><rect x="7.5" y="14" width="4.4" height="1" fill="#6a8aa0"/></svg></div><div class="tx" style="left:84.80px;top:573.92px;transform:scaleX(0.9808)">Системные устройства</div>
<svg class="ex" style="left:49px;top:596.68px" width="8" height="10" viewBox="0 0 8 10"><path d="M2 1 L6 5 L2 9" fill="none" stroke="#8a8a8a" stroke-width="1.3"/></svg><div class="ic" style="left:64px;top:592.18px"><svg width="16" height="16" viewBox="0 0 16 16" style="overflow:visible"><rect x="2.6" y="2" width="12.6" height="6.4" fill="#d4d8dc" stroke="#8a8e94" stroke-width="0.7"/><path d="M3.8 3.8h10.5M3.8 5.6h10.5" stroke="#fff" stroke-width="1"/><path d="M2.4 8 L12 8 L13 15.6 L10 15.6 L9 13 L5.5 13 L4.5 15.6 L1.3 15.6 Z" fill="#5a6068"/><rect x="4" y="9.5" width="2" height="2" fill="#a4aab0"/><rect x="8" y="9.5" width="2" height="2" fill="#a4aab0"/><rect x="12.8" y="9" width="3.6" height="6.6" rx="1.6" fill="#2a2e38"/><rect x="13.8" y="10" width="1.4" height="3" fill="#8a90a0"/></svg></div><div class="tx" style="left:84.80px;top:591.48px;transform:scaleX(0.9831)">Устройства HID (Human Interface Devices)</div>
<svg class="ex" style="left:49px;top:614.24px" width="8" height="10" viewBox="0 0 8 10"><path d="M2 1 L6 5 L2 9" fill="none" stroke="#8a8a8a" stroke-width="1.3"/></svg><div class="ic" style="left:64px;top:609.74px"><svg width="16" height="16" viewBox="0 0 16 16" style="overflow:visible"><rect x="3.1" y="1.9" width="6" height="11.4" fill="#1e2a20"/><rect x="4.2" y="3.2" width="3.6" height="3" fill="#4c6a4a"/><rect x="5.2" y="4" width="1.6" height="1.4" fill="#c8e0c0"/><path d="M2.2 15.2 L3.1 13.3 L9.2 13.3 L9.8 15.2 Z" fill="#111"/><circle cx="12.7" cy="6.2" r="2.6" fill="#e6c450" stroke="#b8902a" stroke-width="0.6"/><rect x="11.8" y="8.3" width="1.9" height="7.4" fill="#e0bc48"/><rect x="10.7" y="11.5" width="1.2" height="1" fill="#c09a30"/><rect x="10.7" y="13.3" width="1.2" height="1" fill="#c09a30"/></svg></div><div class="tx" style="left:84.80px;top:609.04px;transform:scaleX(1.0000)">Устройства безопасности</div>
<!-- status bar -->
<div class="a" style="left:23px;top:650px;width:800px;height:23px;background:#f0f0f0;border-top:1px solid #d8d8d8;box-sizing:border-box"></div>
<div class="a" style="left:23px;top:651px;width:800px;height:1px;background:#fafafa"></div>
<div class="a" style="left:23px;top:652px;width:800px;height:1px;background:#e2e2e2"></div>
<div class="a" style="left:609px;top:655px;width:1px;height:17px;background:#d5d5d5"></div>
<div class="a" style="left:739px;top:655px;width:1px;height:17px;background:#d5d5d5"></div>
</body></html>
